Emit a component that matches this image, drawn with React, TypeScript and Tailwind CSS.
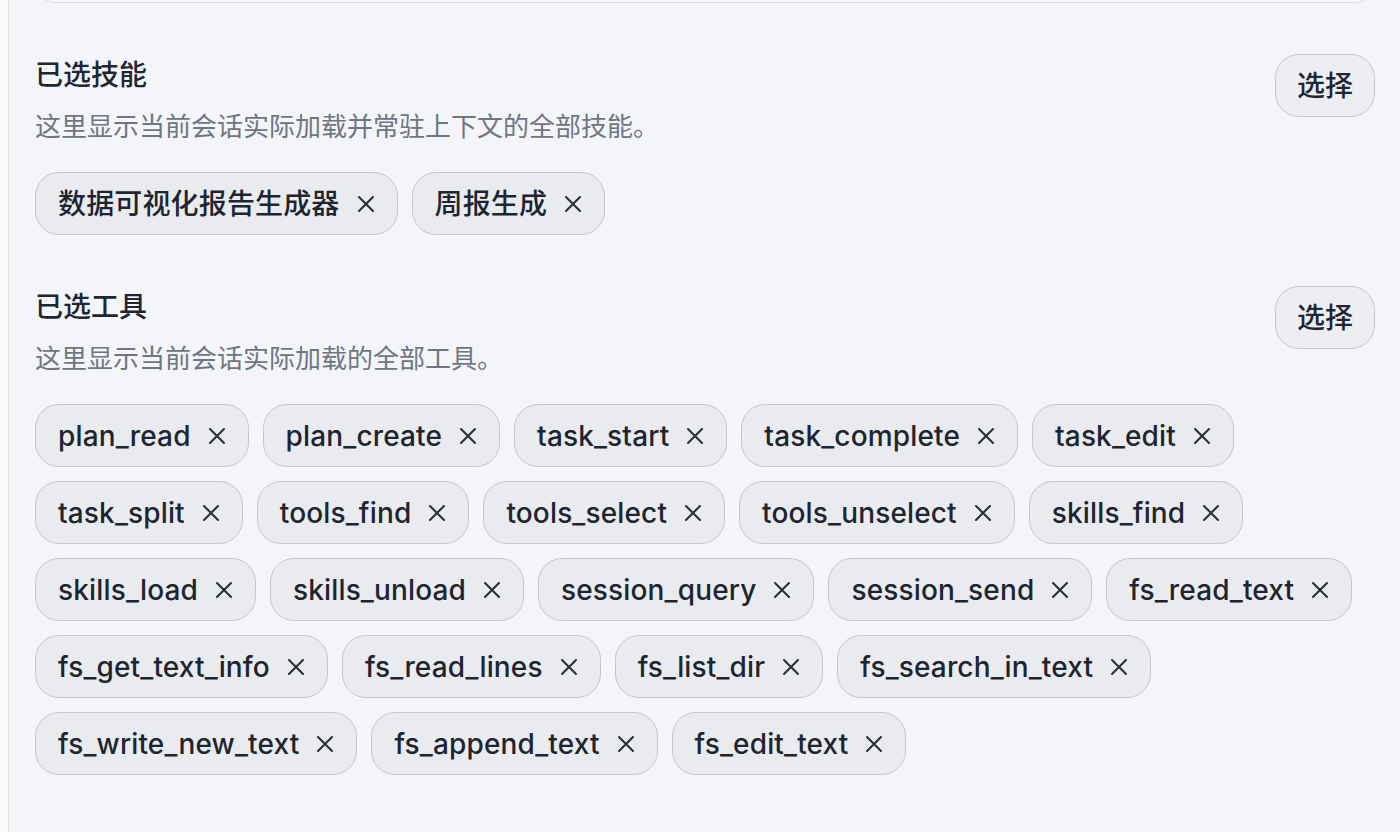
import type { ReactNode } from 'react';

const SKILLS = ['数据可视化报告生成器', '周报生成'];

const TOOLS = [
  'plan_read',
  'plan_create',
  'task_start',
  'task_complete',
  'task_edit',
  'task_split',
  'tools_find',
  'tools_select',
  'tools_unselect',
  'skills_find',
  'skills_load',
  'skills_unload',
  'session_query',
  'session_send',
  'fs_read_text',
  'fs_get_text_info',
  'fs_read_lines',
  'fs_list_dir',
  'fs_search_in_text',
  'fs_write_new_text',
  'fs_append_text',
  'fs_edit_text',
];

function CloseMark() {
  return (
    <svg width="18" height="18" viewBox="0 0 18 18" fill="none" className="shrink-0 text-[#2a303a]">
      <path d="M2 2L16 16M16 2L2 16" stroke="currentColor" strokeWidth="2.1" strokeLinecap="round" />
    </svg>
  );
}

function Chip({ label }: { label: string }) {
  return (
    <span className="flex h-[63px] items-center gap-[17px] rounded-[24px] border-[1.5px] border-[#c4c7cc] bg-[#e9ebee] pl-[22px] pr-[22px] text-[28px] font-medium tracking-[0.15px] text-[#1e2530]">
      {label}
      <CloseMark />
    </span>
  );
}

function Section({ title, hint, children }: { title: string; hint: string; children: ReactNode }) {
  return (
    <section>
      <div className="flex items-start justify-between">
        <div className="pt-[3px]">
          <h2 className="text-[28px] leading-[36px] font-medium text-[#1f2632]">{title}</h2>
          <p className="mt-[16px] text-[26px] leading-[36px] text-[#70767f]">{hint}</p>
        </div>
        <button className="h-[63px] w-[100px] rounded-[24px] border-[1.5px] border-[#c4c7cc] bg-[#eceef1] text-[28px] font-medium text-[#1f2632]">
          选择
        </button>
      </div>
      <div className="mt-[27px] flex flex-wrap gap-[14px]">{children}</div>
    </section>
  );
}

export default function App() {
  return (
    <div
      className="flex h-[832px] w-full overflow-hidden bg-[#fafafa]"
      style={{ fontFamily: '"Inter", "Noto Sans CJK SC", sans-serif' }}
    >
      <div className="w-[8px] shrink-0" />
      <main className="flex-1 border-l border-[#e3e5e8] bg-[#f3f5f8] pl-[26px] pr-[25px]">
        {/* bottom edge of the card above */}
        <div className="mt-[-60px] h-[63px] rounded-[20px] border-[1.5px] border-[#d9dce0] bg-[#f8f9fb]" />

        <div className="mt-[51px] flex flex-col gap-[51px]">
          <Section title="已选技能" hint="这里显示当前会话实际加载并常驻上下文的全部技能。">
            {SKILLS.map((s) => (
              <Chip key={s} label={s} />
            ))}
          </Section>

          <Section title="已选工具" hint="这里显示当前会话实际加载的全部工具。">
            {TOOLS.map((t) => (
              <Chip key={t} label={t} />
            ))}
          </Section>
        </div>
      </main>
    </div>
  );
}
